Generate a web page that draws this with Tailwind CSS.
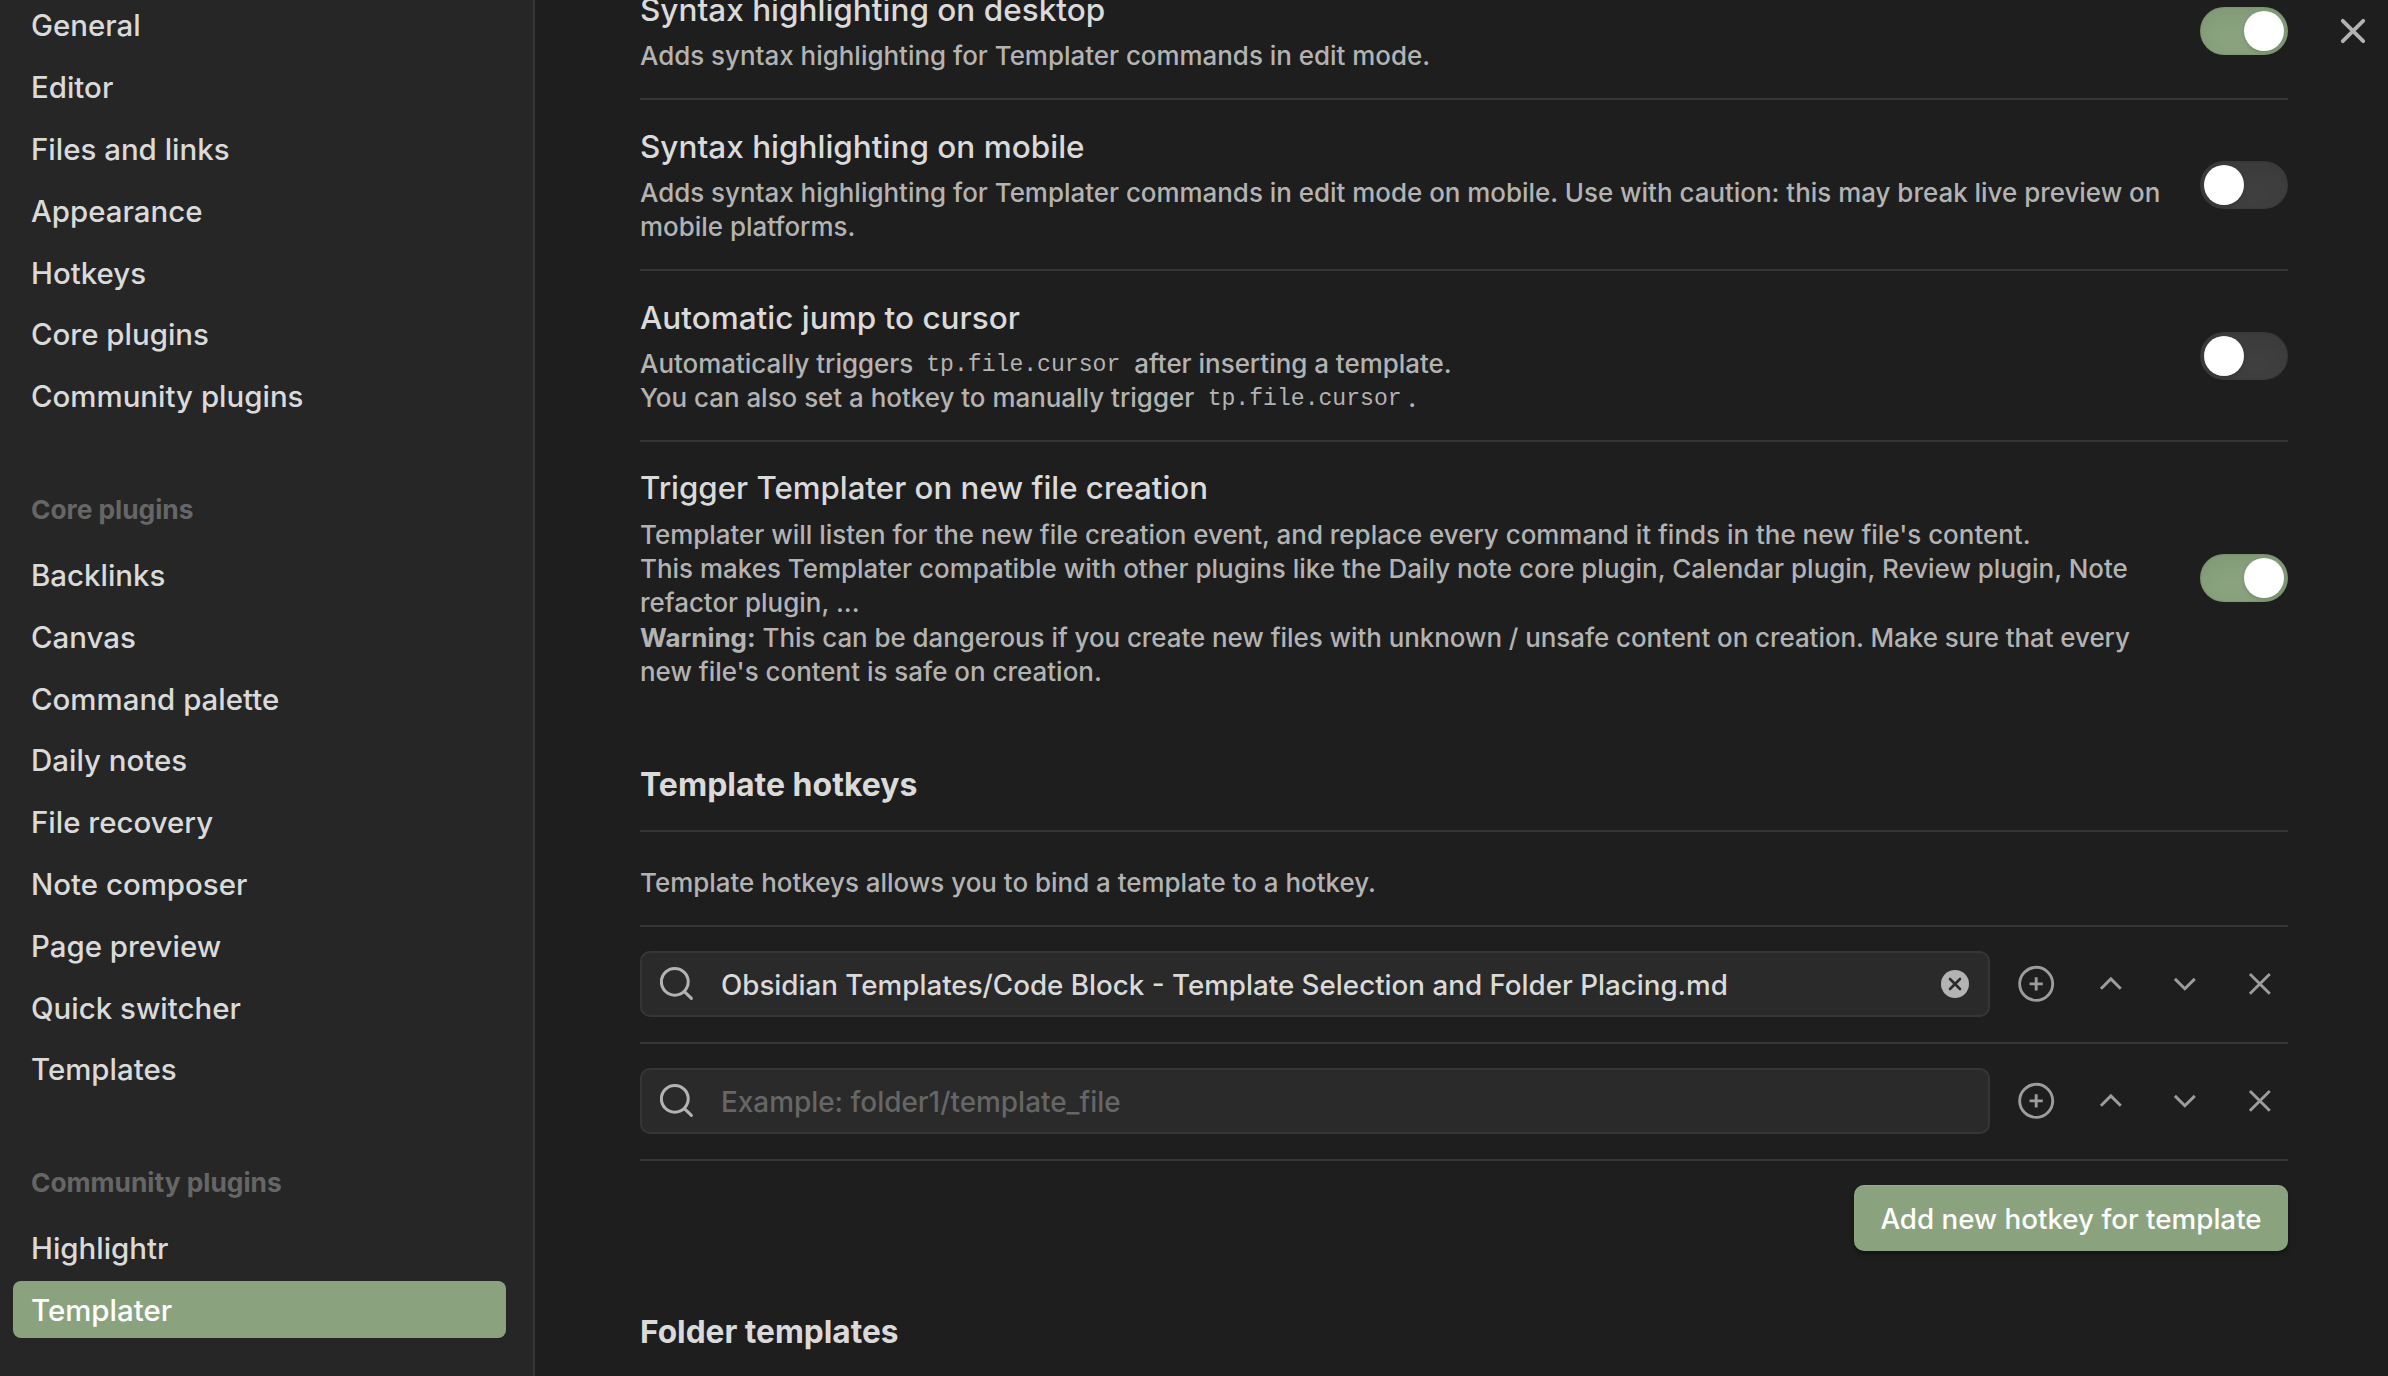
<!DOCTYPE html>
<html lang="en">
<head>
<meta charset="utf-8">
<title>Settings</title>
<script src="https://cdn.jsdelivr.net/npm/@tailwindcss/browser@4"></script>
</head>
<body class="bg-[#1e1e1e]">
<svg class="hidden">
  <symbol id="plus-circle" viewBox="0 0 24 24"><circle cx="11.6" cy="12" r="10"/><path d="M7.6 12h8M11.6 8v8"/></symbol>
  <symbol id="up" viewBox="0 0 24 24"><path d="m18 15-6-6-6 6"/></symbol>
  <symbol id="down" viewBox="0 0 24 24"><path d="m6 9 6 6 6-6"/></symbol>
  <symbol id="x" viewBox="0 0 24 24"><path d="M18 6 6 18M6 6l12 12"/></symbol>
  <symbol id="search" viewBox="0 0 36 36"><circle cx="14.8" cy="15.8" r="13.4"/><path d="m24.4 25.6 7 6.8"/></symbol>
</svg>
<div class="relative flex h-[1376px] w-[2388px] overflow-hidden bg-[#1e1e1e] font-[Inter,sans-serif] font-[450] text-[#dadada]">

  <!-- Sidebar -->
  <aside class="w-[535px] shrink-0 border-r-2 border-[#363636] bg-[#262626] pl-[13px]">
    <nav class="-mt-[3.7px] flex w-[493px] flex-col text-[29.45px] leading-[58.8px] whitespace-nowrap *:mb-1 *:h-[57.8px] *:rounded-lg *:pl-[18px]">
      <a>General</a>
      <a>Editor</a>
      <a>Files and links</a>
      <a>Appearance</a>
      <a>Hotkeys</a>
      <a>Core plugins</a>
      <a>Community plugins</a>
    </nav>
    <h3 class="h-[117.2px] pt-[64.5px] pl-[18px] text-[26.3px] leading-[34px] font-[680] text-[#666666]">Core plugins</h3>
    <nav class="flex w-[493px] flex-col text-[29.45px] leading-[58.8px] whitespace-nowrap *:mb-1 *:h-[57.8px] *:rounded-lg *:pl-[18px]">
      <a>Backlinks</a>
      <a>Canvas</a>
      <a>Command palette</a>
      <a>Daily notes</a>
      <a>File recovery</a>
      <a>Note composer</a>
      <a>Page preview</a>
      <a>Quick switcher</a>
      <a>Templates</a>
    </nav>
    <h3 class="h-[116.6px] pt-[64px] pl-[18px] text-[26.3px] leading-[34px] font-[680] text-[#666666]">Community plugins</h3>
    <nav class="flex w-[493px] flex-col text-[29.45px] leading-[58.8px] whitespace-nowrap *:mb-1 *:h-[57px] *:rounded-lg *:pl-[18px]">
      <a>Highlightr</a>
      <a class="mt-[0.8px] bg-[#8aa37e] text-white">Templater</a>
    </nav>
  </aside>

  <!-- Settings -->
  <main class="ml-[105px] w-[1648px] whitespace-nowrap">
    <section class="-mt-[39px] flex h-[137px] items-center justify-between border-t-2 border-[#363636]">
      <div class="pt-[0.6px]">
        <h4 class="text-[31.5px] leading-[42px]">Syntax highlighting on desktop</h4>
        <p class="mt-[8.4px] text-[25.93px] leading-[34px] text-[#b3b3b3]">Adds syntax highlighting for Templater commands in edit mode.</p>
      </div>
      <div class="flex h-12 w-[88px] justify-end rounded-full bg-[#8aa37e] p-1 shadow-[inset_0_8px_20px_rgba(0,0,0,0.07),inset_0_0_2px_rgba(0,0,0,0.21)]"><span class="size-10 rounded-full bg-white shadow-[0_2px_4px_rgba(0,0,0,0.15)]"></span></div>
    </section>

    <section class="flex h-[171px] items-center justify-between border-t-2 border-[#363636]">
      <div class="pt-[0.6px]">
        <h4 class="text-[31.5px] leading-[42px]">Syntax highlighting on mobile</h4>
        <p class="mt-[8.4px] text-[25.93px] leading-[34px] text-[#b3b3b3]">Adds syntax highlighting for Templater commands in edit mode on mobile. Use with caution: this may break live preview on<br>mobile platforms.</p>
      </div>
      <div class="flex h-12 w-[88px] rounded-full bg-[#3f3f3f] p-1 shadow-[inset_0_8px_20px_rgba(0,0,0,0.07),inset_0_0_2px_rgba(0,0,0,0.21)]"><span class="size-10 rounded-full bg-white shadow-[0_2px_4px_rgba(0,0,0,0.15)]"></span></div>
    </section>

    <section class="flex h-[171px] items-center justify-between border-t-2 border-[#363636]">
      <div class="pt-[0.6px]">
        <h4 class="text-[31.5px] leading-[42px]">Automatic jump to cursor</h4>
        <p class="mt-[8.4px] text-[25.93px] leading-[34px] text-[#b3b3b3]">Automatically triggers <code class="pr-[7px] pl-[6px] align-[1.5px] font-['Liberation_Mono',monospace] text-[23.1px] leading-none">tp.file.cursor</code> after inserting a template.<br>You can also set a hotkey to manually trigger <code class="px-[6.5px] align-[1.5px] font-['Liberation_Mono',monospace] text-[23.1px] leading-none">tp.file.cursor</code>.</p>
      </div>
      <div class="flex h-12 w-[88px] rounded-full bg-[#3f3f3f] p-1 shadow-[inset_0_8px_20px_rgba(0,0,0,0.07),inset_0_0_2px_rgba(0,0,0,0.21)]"><span class="size-10 rounded-full bg-white shadow-[0_2px_4px_rgba(0,0,0,0.15)]"></span></div>
    </section>

    <section class="flex h-[274px] items-center justify-between border-t-2 border-[#363636]">
      <div class="pt-[0.6px]">
        <h4 class="text-[31.25px] leading-[42px]">Trigger Templater on new file creation</h4>
        <p class="mt-[8.6px] text-[25.94px] leading-[34.2px] text-[#b3b3b3]">Templater will listen for the new file creation event, and replace every command it finds in the new file's content.<br>This makes Templater compatible with other plugins like the Daily note core plugin, Calendar plugin, Review plugin, Note<br>refactor plugin, ...<br><strong class="font-[680]">Warning:</strong> <span class="tracking-[-0.05px]">This can be dangerous if you create new files with unknown / unsafe content on creation. Make sure that every</span><br>new file's content is safe on creation.</p>
      </div>
      <div class="flex h-12 w-[88px] justify-end rounded-full bg-[#8aa37e] p-1 shadow-[inset_0_8px_20px_rgba(0,0,0,0.07),inset_0_0_2px_rgba(0,0,0,0.21)]"><span class="size-10 rounded-full bg-white shadow-[0_2px_4px_rgba(0,0,0,0.15)]"></span></div>
    </section>

    <h2 class="mt-[49.5px] h-[66.5px] text-[32px] leading-[42px] font-[650]">Template hotkeys</h2>
    <p class="h-[95px] border-t-2 border-[#363636] pt-[33.5px] text-[25.95px] leading-[34px] text-[#b3b3b3]">Template hotkeys allows you to bind a template to a hotkey.</p>

    <div class="flex h-[117px] gap-[18px] border-t-2 border-[#363636] pt-6">
      <div class="flex h-[66px] flex-1 items-center rounded-[10px] border-2 border-[#363636] bg-[#2a2a2a] pr-[19px] pl-[18px] text-[27.75px]">
        <svg class="mr-[25px] size-9 fill-none stroke-[#b3b3b3] stroke-[3]" stroke-linecap="round"><use href="#search"/></svg>
        <span class="flex-1 pt-[3px]">Obsidian Templates/Code Block - Template Selection and Folder Placing.md</span>
        <svg class="size-7" viewBox="0 0 28 28" fill="none" stroke-linecap="round"><circle cx="14" cy="14" r="14" fill="#b3b3b3"/><path d="m9 9 10 10M19 9 9 19" stroke="#2a2a2a" stroke-width="2.6"/></svg>
      </div>
      <div class="flex h-[66px] items-center gap-[18px] fill-none stroke-[#9c9c9c] stroke-[1.75] *:mx-[8.4px] *:size-[39.7px]" stroke-linecap="round" stroke-linejoin="round">
        <svg><use href="#plus-circle"/></svg>
        <svg><use href="#up"/></svg>
        <svg><use href="#down"/></svg>
        <svg><use href="#x"/></svg>
      </div>
    </div>

    <div class="flex h-[117px] gap-[18px] border-t-2 border-[#363636] pt-6">
      <div class="flex h-[66px] flex-1 items-center rounded-[10px] border-2 border-[#363636] bg-[#2a2a2a] pr-[19px] pl-[18px] text-[27.9px]">
        <svg class="mr-[25px] size-9 fill-none stroke-[#b3b3b3] stroke-[3]" stroke-linecap="round"><use href="#search"/></svg>
        <span class="flex-1 pt-[3px] text-[#666666]">Example: folder1/template_file</span>
      </div>
      <div class="flex h-[66px] items-center gap-[18px] fill-none stroke-[#9c9c9c] stroke-[1.75] *:mx-[8.4px] *:size-[39.7px]" stroke-linecap="round" stroke-linejoin="round">
        <svg><use href="#plus-circle"/></svg>
        <svg><use href="#up"/></svg>
        <svg><use href="#down"/></svg>
        <svg><use href="#x"/></svg>
      </div>
    </div>

    <div class="flex justify-end border-t-2 border-[#363636] pt-6">
      <button class="h-[66px] w-[434px] rounded-[10px] bg-[#8aa37e] pt-[3px] text-[27.75px] text-white shadow-[inset_0_1px_1px_rgba(255,255,255,0.12),0_3px_4px_rgba(0,0,0,0.35)]">Add new hotkey for template</button>
    </div>

    <h2 class="mt-[60px] text-[31.65px] leading-[42px] font-[650]">Folder templates</h2>
  </main>

  <!-- Close -->
  <svg class="absolute top-[17px] left-[2339px] size-7 fill-none stroke-[#b3b3b3] stroke-[3.8]" viewBox="0 0 28 28" stroke-linecap="round"><path d="m3.8 3.8 20.4 20.4M24.2 3.8 3.8 24.2"/></svg>
</div>
</body>
</html>
